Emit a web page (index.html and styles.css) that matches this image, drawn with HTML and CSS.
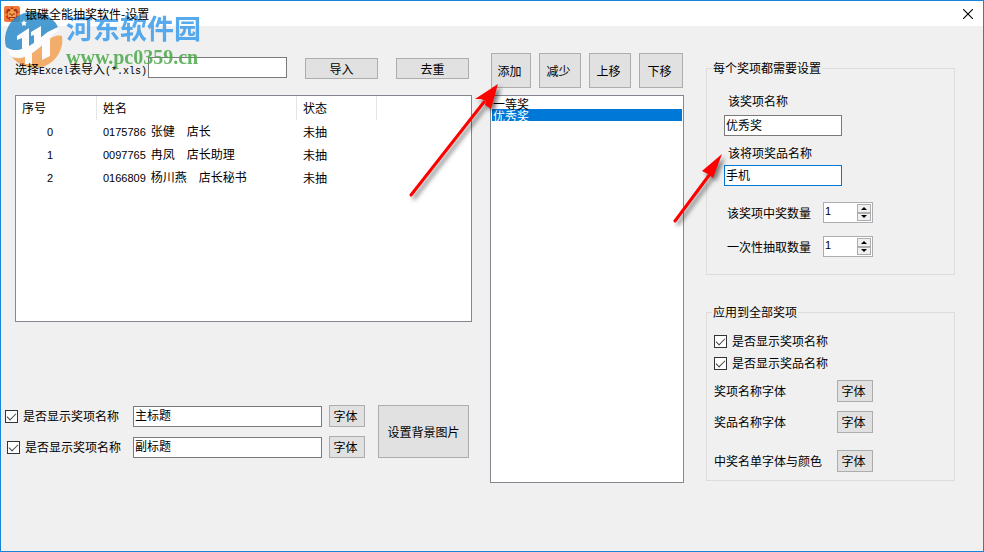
FILE: index.html
```html
<!DOCTYPE html>
<html lang="zh-CN">
<head>
  <meta charset="UTF-8">
  <title>银碟全能抽奖软件-设置</title>
  <link rel="stylesheet" href="styles.css">
</head>
<body>

<div class="window">
  <header class="titlebar">
    <svg class="app-icon" viewBox="0 0 16 16" aria-hidden="true">
      <rect width="16" height="16" rx="2" fill="#ee7b3c"/>
      <circle cx="8" cy="8" r="6.5" fill="#b8321c"/>
      <circle cx="8" cy="8.5" r="4.5" fill="#f2a04a"/>
      <path d="M3 4l3 1M13 4l-3 1M5 8h2M9 8h2M5 11.500h6M8 8v2" stroke="#a02a16" stroke-width="1.200"/>
      <path d="M5 2l3 2 3-2M6 13h4M2 7v3M14 7v3" stroke="#ffb04a" fill="none"/>
    </svg>
    <h1>银碟全能抽奖软件-设置</h1>
    <button class="close" type="button" aria-label="关闭">
      <svg viewBox="0 0 10 10"><path d="M0 0L10 10M10 0L0 10" stroke="#000" stroke-width="1.100"/></svg>
    </button>
  </header>

  <main class="content">
    <section class="people">
      <div class="toolbar import-bar">
        <label for="xlsPath">选择<span class="mono">Excel</span>表导入<span class="mono">(*.xls)</span></label>
        <input type="text" id="xlsPath">
        <button type="button" class="wide">导入</button>
        <button type="button" class="wide">去重</button>
      </div>

      <div class="list-view">
        <table>
          <thead>
            <tr><th class="col-no">序号</th><th class="col-name">姓名</th><th class="col-state">状态</th><th></th></tr>
          </thead>
          <tbody>
            <tr><td class="no">0</td><td><span class="digits">0175786</span>张健　店长</td><td>未抽</td><td></td></tr>
            <tr><td class="no">1</td><td><span class="digits">0097765</span>冉凤　店长助理</td><td>未抽</td><td></td></tr>
            <tr><td class="no">2</td><td><span class="digits">0166809</span>杨川燕　店长秘书</td><td>未抽</td><td></td></tr>
          </tbody>
        </table>
      </div>

      <div class="titles">
        <div class="title-rows">
          <div class="title-row">
            <label class="check"><input type="checkbox" checked>是否显示奖项名称</label>
            <input type="text" value="主标题" aria-label="主标题">
            <button type="button" class="font-btn">字体</button>
          </div>
          <div class="title-row">
            <label class="check indent"><input type="checkbox" checked>是否显示奖项名称</label>
            <input type="text" value="副标题" aria-label="副标题">
            <button type="button" class="font-btn">字体</button>
          </div>
        </div>
        <button type="button" class="bg-btn">设置背景图片</button>
      </div>
    </section>

    <section class="awards">
      <div class="toolbar award-bar">
        <button type="button">添加</button>
        <button type="button">减少</button>
        <button type="button">上移</button>
        <button type="button">下移</button>
      </div>
      <select class="award-list" size="10" aria-label="奖项">
        <option>一等奖</option>
        <option selected>优秀奖</option>
      </select>
    </section>

    <section class="settings">
      <fieldset class="each">
        <legend>每个奖项都需要设置</legend>
        <label class="field-label" for="awardName">该奖项名称</label>
        <input type="text" id="awardName" value="优秀奖">
        <label class="field-label" for="prizeName">该将项奖品名称</label>
        <input type="text" id="prizeName" class="active" value="手机">
        <div class="spin-row">
          <label for="winCount">该奖项中奖数量</label>
          <div class="spinner">
            <input type="number" id="winCount" value="1">
            <div class="arrows">
              <button type="button" aria-label="增加"><svg viewBox="0 0 6 3"><path d="M3 0L6 3H0z"/></svg></button>
              <button type="button" aria-label="减少"><svg viewBox="0 0 6 3"><path d="M0 0H6L3 3z"/></svg></button>
            </div>
          </div>
        </div>
        <div class="spin-row">
          <label for="drawCount">一次性抽取数量</label>
          <div class="spinner">
            <input type="number" id="drawCount" value="1">
            <div class="arrows">
              <button type="button" aria-label="增加"><svg viewBox="0 0 6 3"><path d="M3 0L6 3H0z"/></svg></button>
              <button type="button" aria-label="减少"><svg viewBox="0 0 6 3"><path d="M0 0H6L3 3z"/></svg></button>
            </div>
          </div>
        </div>
      </fieldset>

      <fieldset class="all">
        <legend>应用到全部奖项</legend>
        <label class="check"><input type="checkbox" checked>是否显示奖项名称</label>
        <label class="check"><input type="checkbox" checked>是否显示奖品名称</label>
        <div class="font-rows">
          <span>奖项名称字体</span><button type="button" class="font-btn">字体</button>
          <span>奖品名称字体</span><button type="button" class="font-btn">字体</button>
          <span class="last">中奖名单字体与颜色</span><button type="button" class="font-btn last">字体</button>
        </div>
      </fieldset>
    </section>
  </main>

  <!-- site mark over the top left corner -->
  <div class="watermark">
    <svg class="mark-logo" viewBox="0 0 58 58" aria-hidden="true">
      <path d="M1 36A28 28 0 0 1 53 16C45 19 38 26 29 32C19 39 9 42 1 36z" fill="#2b8ccb"/>
      <path d="M57 25A28 28 0 0 1 7 46C18 50 27 43 35 36C43 29 49 23 57 25z" fill="#f2a252"/>
      <path d="M12 25L24 17V37L17 41V27L12 29zM26 21L36 15V33L29 37V24L26 25z" fill="#fff"/>
      <path d="M20 40L27 37V53H20zM37 32L45 25V45L37 49z" fill="#fff"/>
      <path d="M1 36C9 42 19 39 29 32C38 26 45 15 55 19C47 22 42 30 35 36C27 43 14 50 5 44z" fill="#fff"/>
      <path d="M19 9l1 2 2 .3-1.500 1.400.4 2.200-1.900-1-2 1 .4-2.200L16 11.300l2-.3z" fill="#fff"/>
    </svg>
    <div class="mark-text">
      <div class="mark-name">河东软件园</div>
      <div class="mark-url">www.pc0359.cn</div>
    </div>
  </div>

  <!-- pointer arrows -->
  <svg class="pointer pointer-add" viewBox="0 0 96 120" aria-hidden="true">
    <path d="M5 115L78 22" stroke="#ff0000" stroke-width="3" stroke-linecap="round"/>
    <path d="M92 4L85 29L79 25L80 21L75 19L69 19z" fill="#ff0000"/>
  </svg>
  <svg class="pointer pointer-prize" viewBox="0 0 60 80" aria-hidden="true">
    <path d="M5 73L40 26" stroke="#ff0000" stroke-width="3" stroke-linecap="round"/>
    <path d="M52 6L43 30L38 26L32 23z" fill="#ff0000"/>
  </svg>
</div>

</body>
</html>
```
FILE: styles.css
```css
* {
  box-sizing: border-box;
}

body {
  margin: 0;
  font-family: "Noto Sans CJK SC", sans-serif;
  font-size: 12px;
  line-height: 16px;
  color: #000;
}

input,
button,
select {
  font: inherit;
  color: inherit;
  margin: 0;
}

.window {
  position: relative;
  display: flex;
  flex-direction: column;
  min-height: 100vh;
  background: #f0f0f0;
  border: 1px solid #1883d7;
}

/* title bar */
.titlebar {
  display: flex;
  align-items: center;
  height: 25px;
  padding: 0 10px 0 3px;
  background: #fff;
}

.titlebar h1 {
  position: relative;
  z-index: 1;
  flex: 1;
  margin: 0 0 0 5px;
  font-size: 12px;
  font-weight: normal;
}

.app-icon {
  width: 16px;
  height: 16px;
}

.close {
  display: flex;
  padding: 0;
  border: none;
  background: none;
}

.close svg {
  width: 10px;
  height: 10px;
}

/* layout */
.content {
  display: grid;
  grid-template-columns: 467fr 194fr 253fr;
  column-gap: 18px;
  align-items: start;
  padding: 27px 28px 0 4px;
}

.toolbar {
  display: flex;
  height: 35px;
  margin-bottom: 7px;
}

button {
  padding: 0;
  background: #e1e1e1;
  border: 1px solid #adadad;
}

input[type="text"] {
  height: 21px;
  padding: 0 1px 3px;
  border: 1px solid #7a7a7a;
  background: #fff;
  outline: none;
}

input[type="text"].active {
  border-color: #0078d7;
}

.mono {
  font-family: "Liberation Mono", monospace;
  font-size: 10px;
}

.digits,
.no {
  font-family: "Liberation Sans", sans-serif;
  font-size: 11px;
}

.digits {
  margin-right: 5px;
}

.check {
  display: flex;
  align-items: center;
  gap: 5px;
}

input[type="checkbox"] {
  appearance: none;
  display: flex;
  justify-content: center;
  width: 13px;
  height: 13px;
  border: 1px solid #333;
  background: #fff;
}

input[type="checkbox"]:checked::before {
  content: "";
  box-sizing: border-box;
  width: 9px;
  height: 5px;
  margin-top: 2px;
  border: solid #444;
  border-width: 0 0 1px 1px;
  transform: rotate(-45deg);
}

.font-btn {
  width: 36px;
  height: 22px;
  padding-right: 3px;
}

/* left column */
.import-bar {
  align-items: flex-start;
  padding: 4px 3px 0 10px;
}

.import-bar label {
  position: relative;
  z-index: 1;
  line-height: 24px;
}

.import-bar input {
  flex: 1;
  min-width: 0;
  margin-left: 1px;
}

.wide {
  width: 73px;
  height: 21px;
  margin: 1px 0 0 18px;
}

.list-view {
  min-height: 227px;
  margin-left: 10px;
  border: 1px solid #828790;
  background: #fff;
}

table {
  width: 100%;
  table-layout: fixed;
  border-collapse: separate;
  border-spacing: 0;
}

th,
td {
  height: 23px;
  padding: 0 6px;
  font-weight: normal;
  text-align: left;
}

th {
  height: 24px;
  border-right: 1px solid #e5e5e5;
}

th:last-child {
  border-right: none;
}

.col-no {
  width: 81px;
}

.col-name {
  width: 200px;
}

.col-state {
  width: 80px;
}

td.no {
  padding-left: 31px;
}

.titles {
  display: flex;
  gap: 13px;
  align-items: flex-start;
  margin-top: 83px;
  padding-right: 3px;
}

.title-rows {
  flex: 1;
  display: grid;
  gap: 9px;
}

.title-row {
  display: flex;
  align-items: center;
}

.title-row .check {
  width: 128px;
}

.title-row .indent {
  padding-left: 2px;
}

.title-row input[type="text"] {
  flex: 1;
  min-width: 0;
}

.title-row .font-btn {
  margin-left: 7px;
}

.bg-btn {
  width: 91px;
  height: 53px;
}

/* middle column */
.award-bar {
  display: grid;
  grid-template-columns: 40fr 42fr 42fr 44fr;
  gap: 8px;
  padding: 0 1px;
}

.award-bar button {
  padding-right: 3px;
}

.award-list {
  display: block;
  width: 100%;
  height: 388px;
  padding: 1px;
  border: 1px solid #828790;
  border-radius: 0;
  background: #fff;
  outline: none;
  overflow: hidden;
}

.award-list option {
  display: flex;
  align-items: center;
  height: 12px;
  min-height: 12px;
  padding: 0 1px;
  line-height: 12px;
}

.award-list option:checked {
  background: #0078d7 linear-gradient(#0078d7, #0078d7);
  -webkit-text-fill-color: #fff;
}

/* right column */
.settings {
  padding: 7px 0 0 4px;
}

fieldset {
  min-width: 0;
  margin: 0;
  border: 1px solid #dcdcdc;
}

legend {
  padding: 0 1px;
}

.each {
  height: 215px;
  padding: 17px 17px 0;
}

.each legend {
  margin-left: -12px;
}

.field-label {
  display: block;
  margin-left: 4px;
}

.each input[type="text"] {
  display: block;
  width: 118px;
  margin: 6px 0 9px;
}

.each #prizeName {
  margin: 4px 0 16px;
}

.spin-row {
  display: flex;
  align-items: center;
  margin: 0 0 13px 3px;
}

.spin-row label {
  width: 96px;
}

.spinner {
  display: flex;
  width: 50px;
  height: 21px;
  border: 1px solid #abadb3;
  background: #fff;
}

.spinner input {
  flex: 1;
  min-width: 0;
  padding: 0 1px 3px;
  border: none;
  background: none;
  outline: none;
  appearance: textfield;
  font-family: "Liberation Sans", sans-serif;
  font-size: 11px;
}

.spinner input::-webkit-inner-spin-button {
  appearance: none;
}

.arrows {
  display: flex;
  flex-direction: column;
  width: 16px;
  padding: 1px;
}

.arrows button {
  flex: 1;
  display: flex;
  align-items: center;
  justify-content: center;
  background: #f0f0f0;
}

.arrows svg {
  width: 6px;
  height: 3px;
}

.all {
  height: 177px;
  margin-top: 29px;
  padding: 13px 7px 0;
}

.all legend {
  margin-left: -2px;
}

.all .check {
  margin-bottom: 6px;
}

.font-rows {
  display: grid;
  grid-template-columns: 123px auto;
  justify-content: start;
  align-items: center;
  row-gap: 9px;
  padding-top: 3px;
}

.font-rows .last {
  margin-top: 8px;
}

/* overlays */
.watermark {
  position: absolute;
  top: 10px;
  left: 4px;
  display: flex;
  opacity: 0.85;
  pointer-events: none;
}

.mark-logo {
  width: 58px;
  height: 58px;
}

.mark-text {
  padding: 1px 0 0 3px;
}

.mark-name {
  font-size: 27px;
  font-weight: bold;
  line-height: 32px;
  color: #3b9cec;
}

.mark-url {
  font-family: "Liberation Serif", serif;
  font-size: 20px;
  font-weight: bold;
  line-height: 26px;
  color: #4ba84a;
}

.pointer {
  position: absolute;
  pointer-events: none;
  filter: drop-shadow(3px 3px 2px rgba(0, 0, 0, 0.5));
}

.pointer-add {
  top: 79px;
  left: 405px;
  width: 96px;
  height: 120px;
}

.pointer-prize {
  top: 147px;
  left: 669px;
  width: 60px;
  height: 80px;
}
```
